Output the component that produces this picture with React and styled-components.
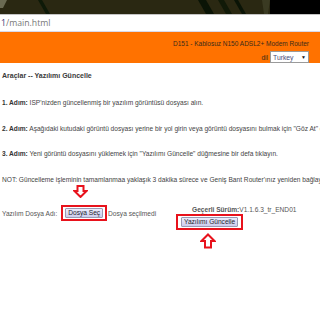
import React from 'react'
import styled, { createGlobalStyle } from 'styled-components'

const Global = createGlobalStyle`
  html, body {
    margin: 0;
    padding: 0;
    background: #ffffff;
    overflow: hidden;
  }
  body {
    font-family: "Liberation Sans", Arial, sans-serif;
    color: #333333;
  }
`

const Screen = styled.div`
  width: 320px;
  height: 320px;
  overflow: hidden;
  background: #ffffff;
`

const TabStrip = styled.div`
  height: 14px;
  background: #000000;
  svg { display: block; }
`

const AddressBar = styled.div`
  height: 16px;
  border-top: 1px solid #c4c4c4;
  border-bottom: 1px solid #d9d9ea;
  background: #ffffff;
  font-family: "Open Sans", "Liberation Sans", sans-serif;
  font-size: 8.7px;
  line-height: 16px;
  color: #777777;
  padding-left: 1px;
  white-space: nowrap;
`

const Host = styled.span`
  color: #3a3a78;
`

const Header = styled.div`
  height: 31px;
  background: #ff7200;
  display: flex;
  flex-direction: column;
  align-items: flex-end;
  padding-right: 11px;
  font-size: 6.5px;
  color: #3a2a1a;
`

const Title = styled.div`
  margin-top: 7px;
  line-height: 9px;
`

const LangRow = styled.div`
  margin-top: 3px;
  display: flex;
  align-items: center;
  gap: 2px;
`

const Select = styled.div`
  width: 33px;
  height: 10px;
  background: #ffffff;
  border: 1px solid #9a9a9a;
  display: flex;
  align-items: center;
  justify-content: space-between;
  padding: 0 2px;
  color: #4a4a7a;
  font-size: 6.8px;
`

const Caret = styled.span`
  font-size: 5px;
  color: #111;
`

const Content = styled.div`
  padding: 8px 0 0 2px;
  font-size: 6.6px;
  white-space: nowrap;
`

const Heading = styled.div`
  font-weight: bold;
  font-size: 7px;
  line-height: 10px;
  color: #3a3a3a;
`

const Line = styled.div`
  line-height: 10px;
  margin-top: ${p => p.$gap}px;
  color: #444;
  b { color: #333; }
`

const Form = styled.div`
  margin-top: 20px;
  display: grid;
  grid-template-columns: 174px auto;
  align-items: start;
`

const LeftCell = styled.div`
  display: flex;
  align-items: center;
  color: #555;
`

const Label = styled.span`
  margin-right: 4px;
`

const Mark = styled.span`
  position: relative;
  display: inline-flex;
  border: 2px solid #e8121c;
  padding: ${p => p.$pad};
  margin-right: 1px;
`

const ArrowDown = styled.svg`
  position: absolute;
  left: 10px;
  top: -22px;
`

const ArrowUp = styled.svg`
  position: absolute;
  left: 22px;
  bottom: -21px;
`

const Button = styled.button`
  font-family: "Liberation Sans", Arial, sans-serif;
  font-size: 6.6px;
  line-height: 8px;
  height: 10px;
  padding: 0 2px;
  border: 1px solid #9a9ab4;
  border-radius: 1px;
  background: linear-gradient(#ececfb, #ccccec);
  color: #1e1e2e;
  display: flex;
  align-items: center;
`

const RightCell = styled.div`
  display: flex;
  flex-direction: column;
  align-items: flex-start;
`

const Version = styled.div`
  margin-left: 16px;
  line-height: 10px;
  color: #555;
  b { color: #555; }
`

const ButtonSlot = styled.div`
  margin-top: -1px;
`

function Stripes() {
  return (
    <svg width="320" height="14" viewBox="0 0 320 14">
      <rect x="0" y="0" width="270" height="14" fill="#2a2812" />
      <polygon points="0,0 7,0 3,8 0,8" fill="#6a6a52" />
      <polygon points="38,0 42,0 50,14 46,14" fill="#0e1a08" />
      <polygon points="198,0 206,0 214,14 206,14" fill="#0a1406" />
      <polygon points="218,0 224,0 232,14 226,14" fill="#111a08" />
      <polygon points="234,0 238,0 246,14 242,14" fill="#0a1406" />
      <polygon points="262,0 270,0 268,14 264,14" fill="#3a3a22" />
    </svg>
  )
}

export default function App() {
  return (
    <Screen>
      <Global />
      <TabStrip><Stripes /></TabStrip>
      <AddressBar><Host>1</Host>/main.html</AddressBar>
      <Header>
        <Title>D151 - Kablosuz N150 ADSL2+ Modem Router</Title>
        <LangRow>
          <span>dil</span>
          <Select>Turkey <Caret>▼</Caret></Select>
        </LangRow>
      </Header>
      <Content>
        <Heading>Araçlar -- Yazılımı Güncelle</Heading>
        <Line $gap={17}><b>1. Adım:</b> ISP'nizden güncellenmiş bir yazılım görüntüsü dosyası alın.</Line>
        <Line $gap={16}><b>2. Adım:</b> Aşağıdaki kutudaki görüntü dosyası yerine bir yol girin veya görüntü dosyasını bulmak için "Göz At" düğmesine tıklayın.</Line>
        <Line $gap={15}><b>3. Adım:</b> Yeni görüntü dosyasını yüklemek için "Yazılımı Güncelle" düğmesine bir defa tıklayın.</Line>
        <Line $gap={16}>NOT: Güncelleme işleminin tamamlanmaa yaklaşık 3 dakika sürece ve Geniş Bant Router'ınız yeniden bağlayacaktır.</Line>
        <Form>
          <LeftCell>
            <Label>Yazılım Dosya Adı:</Label>
            <Mark $pad="1px 2px">
              <ArrowDown width="15" height="13" viewBox="0 0 15 13">
                <path d="M4.5 1 H10.5 V6 H13.5 L7.5 12 L1.5 6 H4.5 Z" fill="#fff" stroke="#e8121c" strokeWidth="2" />
              </ArrowDown>
              <Button>Dosya Seç</Button>
            </Mark>
            <span>Dosya seçilmedi</span>
          </LeftCell>
          <RightCell>
            <Version><b>Geçerli Sürüm:</b>V1.1.6.3_tr_END01</Version>
            <ButtonSlot>
              <Mark $pad="1px 3px">
                <Button>Yazılımı Güncelle</Button>
                <ArrowUp width="16" height="16" viewBox="0 0 16 16">
                  <path d="M8 1.5 L14.5 8 H11 V14.5 H5 V8 H1.5 Z" fill="#fff" stroke="#e8121c" strokeWidth="2" />
                </ArrowUp>
              </Mark>
            </ButtonSlot>
          </RightCell>
        </Form>
      </Content>
    </Screen>
  )
}
